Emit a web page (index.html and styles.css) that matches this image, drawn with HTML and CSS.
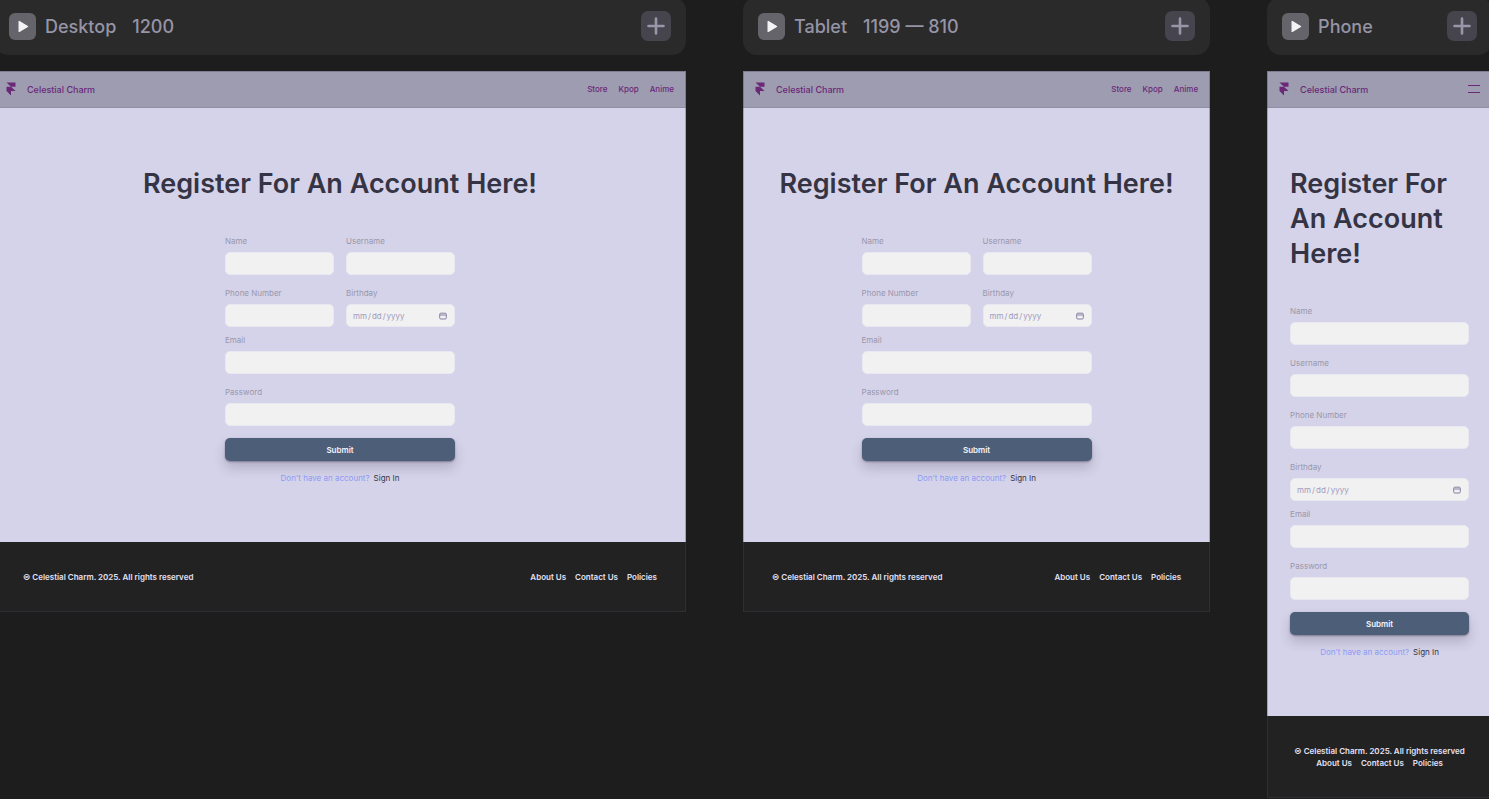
FILE: index.html
```html
<!DOCTYPE html>
<html lang="en">
<head>
    <meta charset="UTF-8">
    <title>Celestial Charm - Register</title>
    <link rel="stylesheet" href="styles.css">
</head>
<body>
    <!-- Shared icons -->
    <svg class="icon-defs" aria-hidden="true">
        <symbol id="play" viewBox="0 0 27 27"><path d="M10.2 8.6v9.8l8.3-4.9z" fill="#f4f4f6" stroke="#f4f4f6" stroke-width="1.4" stroke-linejoin="round"/></symbol>
        <symbol id="plus" viewBox="0 0 30 30"><path d="M15 7.5v15M7.5 15h15" stroke="#9896a9" stroke-width="2.6" stroke-linecap="round"/></symbol>
        <symbol id="logo" viewBox="0 0 10 14"><path d="M0.5 0.5h9v4.3H5zM0.5 4.8H5l4.5 4.2H0.5zM0.5 9H5v4.5z" fill="#6b2878"/></symbol>
    </svg>

    <div class="canvas">
        <!-- Desktop -->
        <section class="breakpoint">
            <header class="tab">
                <button class="play-btn" aria-label="Preview desktop"><svg><use href="#play"/></svg></button>
                <span>Desktop</span>
                <span class="tab-size">1200</span>
                <button class="add-btn" aria-label="Add breakpoint"><svg><use href="#plus"/></svg></button>
            </header>
            <div class="page">
                <nav class="navbar">
                    <svg class="logo"><use href="#logo"/></svg>
                    <a href="#home" class="brand">Celestial Charm</a>
                    <a href="#store">Store</a>
                    <a href="#kpop">Kpop</a>
                    <a href="#anime">Anime</a>
                </nav>
                <main>
                    <h1>Register For An Account Here!</h1>
                    <form>
                        <div class="fields">
                            <div class="field"><label for="name1">Name</label><input type="text" id="name1"></div>
                            <div class="field"><label for="username1">Username</label><input type="text" id="username1"></div>
                            <div class="field"><label for="phone1">Phone Number</label><input type="tel" id="phone1"></div>
                            <div class="field"><label for="birthday1">Birthday</label><input type="date" id="birthday1"></div>
                        </div>
                        <div class="fields wide">
                            <div class="field"><label for="email1">Email</label><input type="email" id="email1"></div>
                            <div class="field"><label for="password1">Password</label><input type="password" id="password1"></div>
                            <button type="submit" class="submit-btn">Submit</button>
                        </div>
                        <p class="signin"><span>Don't have an account?</span><a href="#signin">Sign In</a></p>
                    </form>
                </main>
                <footer>
                    <p>© Celestial Charm. 2025. All rights reserved</p>
                    <div class="footer-links">
                        <a href="#about">About Us</a>
                        <a href="#contact">Contact Us</a>
                        <a href="#policies">Policies</a>
                    </div>
                </footer>
            </div>
        </section>

        <!-- Tablet -->
        <section class="breakpoint">
            <header class="tab">
                <button class="play-btn" aria-label="Preview tablet"><svg><use href="#play"/></svg></button>
                <span>Tablet</span>
                <span class="tab-size">1199 — 810</span>
                <button class="add-btn" aria-label="Add breakpoint"><svg><use href="#plus"/></svg></button>
            </header>
            <div class="page">
                <nav class="navbar">
                    <svg class="logo"><use href="#logo"/></svg>
                    <a href="#home" class="brand">Celestial Charm</a>
                    <a href="#store">Store</a>
                    <a href="#kpop">Kpop</a>
                    <a href="#anime">Anime</a>
                </nav>
                <main>
                    <h1>Register For An Account Here!</h1>
                    <form>
                        <div class="fields">
                            <div class="field"><label for="name2">Name</label><input type="text" id="name2"></div>
                            <div class="field"><label for="username2">Username</label><input type="text" id="username2"></div>
                            <div class="field"><label for="phone2">Phone Number</label><input type="tel" id="phone2"></div>
                            <div class="field"><label for="birthday2">Birthday</label><input type="date" id="birthday2"></div>
                        </div>
                        <div class="fields wide">
                            <div class="field"><label for="email2">Email</label><input type="email" id="email2"></div>
                            <div class="field"><label for="password2">Password</label><input type="password" id="password2"></div>
                            <button type="submit" class="submit-btn">Submit</button>
                        </div>
                        <p class="signin"><span>Don't have an account?</span><a href="#signin">Sign In</a></p>
                    </form>
                </main>
                <footer>
                    <p>© Celestial Charm. 2025. All rights reserved</p>
                    <div class="footer-links">
                        <a href="#about">About Us</a>
                        <a href="#contact">Contact Us</a>
                        <a href="#policies">Policies</a>
                    </div>
                </footer>
            </div>
        </section>

        <!-- Phone -->
        <section class="breakpoint phone">
            <header class="tab">
                <button class="play-btn" aria-label="Preview phone"><svg><use href="#play"/></svg></button>
                <span>Phone</span>
                <button class="add-btn" aria-label="Add breakpoint"><svg><use href="#plus"/></svg></button>
            </header>
            <div class="page">
                <nav class="navbar">
                    <svg class="logo"><use href="#logo"/></svg>
                    <a href="#home" class="brand">Celestial Charm</a>
                    <button class="menu-btn" aria-label="Menu"></button>
                </nav>
                <main>
                    <h1>Register For An Account Here!</h1>
                    <form>
                        <div class="fields wide">
                            <div class="field"><label for="name3">Name</label><input type="text" id="name3"></div>
                            <div class="field"><label for="username3">Username</label><input type="text" id="username3"></div>
                            <div class="field"><label for="phone3">Phone Number</label><input type="tel" id="phone3"></div>
                            <div class="field"><label for="birthday3">Birthday</label><input type="date" id="birthday3"></div>
                        </div>
                        <div class="fields wide">
                            <div class="field"><label for="email3">Email</label><input type="email" id="email3"></div>
                            <div class="field"><label for="password3">Password</label><input type="password" id="password3"></div>
                            <button type="submit" class="submit-btn">Submit</button>
                        </div>
                        <p class="signin"><span>Don't have an account?</span><a href="#signin">Sign In</a></p>
                    </form>
                </main>
                <footer>
                    <p>© Celestial Charm. 2025. All rights reserved</p>
                    <div class="footer-links">
                        <a href="#about">About Us</a>
                        <a href="#contact">Contact Us</a>
                        <a href="#policies">Policies</a>
                    </div>
                </footer>
            </div>
        </section>
    </div>
</body>
</html>
```
FILE: styles.css
```css
* {
    box-sizing: border-box;
}

body {
    margin: 0;
    overflow: hidden;
    background-color: #1d1d1d;
    font-family: Inter, "Liberation Sans", sans-serif;
    font-size: 8px;
}

h1, p {
    margin: 0;
}

a {
    color: inherit;
    text-decoration: none;
}

button {
    border: none;
    padding: 0;
    font-family: inherit;
    cursor: pointer;
}

.icon-defs {
    display: none;
}

/* The canvas is scrolled a little, so it runs past the window edges */
.canvas {
    display: grid;
    grid-template-columns: 1200fr 810fr 390fr;
    align-items: start;
    gap: 57px;
    margin: -3px -3px 0 -6px;
}

.breakpoint {
    display: flex;
    flex-direction: column;
    gap: 16px;
    min-width: 0;
}

/* Breakpoint title bar */
.tab {
    display: flex;
    align-items: center;
    height: 58px;
    padding: 0 15px;
    border-radius: 14px;
    background-color: #2a2a2a;
    color: #9694a6;
    font-size: 18px;
    font-weight: 500;
}

.tab svg {
    display: block;
    width: 100%;
    height: 100%;
}

.tab-size {
    margin-left: 16px;
}

.play-btn {
    width: 27px;
    height: 27px;
    margin-right: 9px;
    border-radius: 6px;
    background-color: #65646b;
}

.add-btn {
    width: 30px;
    height: 30px;
    margin-left: auto;
    border-radius: 7px;
    background-color: #46454d;
}

.page {
    outline: 1px solid rgba(70, 68, 90, 0.35);
    outline-offset: -1px;
}

/* Site navigation */
.navbar {
    display: flex;
    align-items: center;
    gap: 11px;
    height: 37px;
    padding: 0 12px;
    border-bottom: 1px solid #908fa4;
    background-color: #9d9cb1;
    color: #6b2878;
    font-weight: 500;
}

.logo {
    width: 10px;
    height: 14px;
}

.brand {
    margin-right: auto;
    font-size: 9px;
}

.menu-btn {
    width: 12px;
    height: 8px;
    border-top: 1px solid #6b2878;
    border-bottom: 1px solid #6b2878;
    background: none;
}

/* Register form */
main {
    display: flex;
    flex-direction: column;
    align-items: center;
    gap: 34px;
    padding: 58px 23px 59px;
    background-color: #d5d3e9;
}

h1 {
    color: #353444;
    font-size: 27px;
    font-weight: 600;
    line-height: 35px;
}

.phone h1 {
    width: 100%;
}

form {
    width: 100%;
    max-width: 230px;
}

.fields {
    display: grid;
    grid-template-columns: 1fr 1fr;
    gap: 12px;
}

.fields.wide {
    grid-template-columns: 1fr;
}

.fields + .fields {
    margin-top: 7px;
}

.field {
    display: flex;
    flex-direction: column;
    gap: 5px;
    min-width: 0;
}

label {
    color: #9997ab;
    line-height: 12px;
}

input {
    width: 100%;
    height: 23px;
    padding: 0 7px 0 5px;
    border: 1px solid #e9e8f0;
    border-radius: 5px;
    background-color: #f1f1f1;
    color: #a09abf;
    font-family: inherit;
    font-size: 8px;
}

input::-webkit-calendar-picker-indicator {
    width: 8px;
    height: 8px;
    padding: 0;
    background: url("data:image/svg+xml,%3Csvg xmlns='http://www.w3.org/2000/svg' viewBox='0 0 8 8'%3E%3Cpath d='M1.8 1.2h4.4q1.1 0 1.1 1.1v3.6q0 1.1-1.1 1.1H1.8Q.7 7 .7 5.9V2.3q0-1.1 1.1-1.1zM.7 3h6.6' fill='none' stroke='%238580a5'/%3E%3C/svg%3E") center / 8px no-repeat;
}

.submit-btn {
    height: 23px;
    border-radius: 5px;
    background-color: #4d5e78;
    box-shadow: 0 1px 2px rgba(40, 35, 60, 0.4), 0 7px 12px rgba(40, 35, 60, 0.2);
    color: #f4f2fb;
    font-size: 8px;
    font-weight: 600;
}

.signin {
    display: flex;
    justify-content: center;
    gap: 4px;
    margin-top: 12px;
    color: #353444;
    line-height: 10px;
}

.signin span {
    color: #8c9bf5;
}

/* Footer */
footer {
    display: flex;
    justify-content: space-between;
    align-items: center;
    padding: 29px;
    background-color: #222222;
    color: #e4e1f5;
    font-weight: 600;
    line-height: 12px;
}

.footer-links {
    display: flex;
    gap: 9px;
}

.phone footer {
    flex-direction: column;
    padding: 29px 23px;
}
```
